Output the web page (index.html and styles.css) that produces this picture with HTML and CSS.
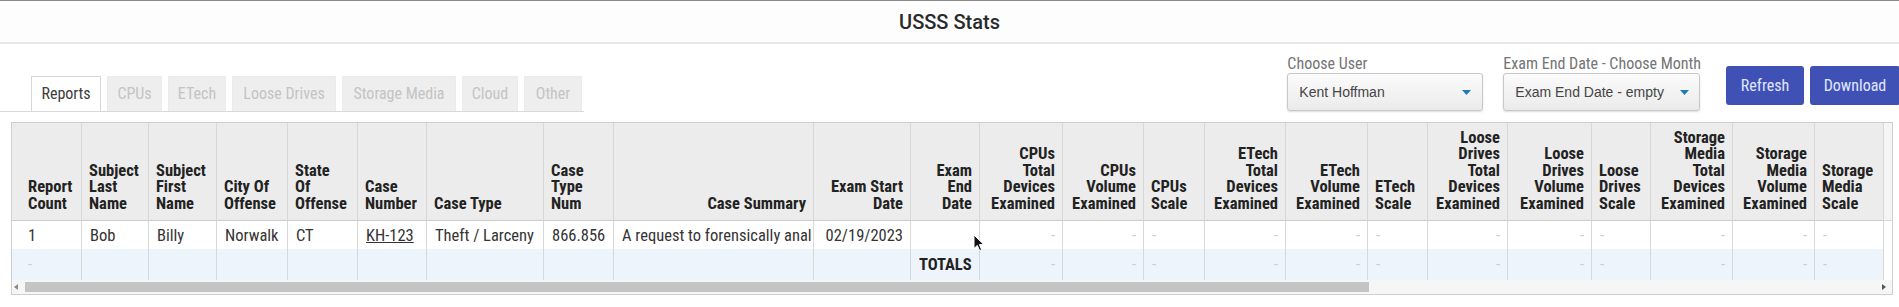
FILE: index.html
```html
<!DOCTYPE html>
<html lang="en">
<head>
<meta charset="utf-8">
<title>USSS Stats</title>
<link rel="stylesheet" href="styles.css">
</head>
<body>
<header class="topbar"><h1 class="title">USSS Stats</h1></header>

<div class="toolbar">
  <nav class="tabs">
    <span class="tab active t1">Reports</span>
    <span class="tab t2">CPUs</span>
    <span class="tab t3">ETech</span>
    <span class="tab t4">Loose Drives</span>
    <span class="tab t5">Storage Media</span>
    <span class="tab t6">Cloud</span>
    <span class="tab t7">Other</span>
  </nav>
  <div class="controls">
    <div class="field f1">
      <div class="field-label">Choose User</div>
      <div class="select s1"><span>Kent Hoffman</span><svg class="caret" width="9" height="5" viewBox="0 0 9 5"><path d="M0 0H9L4.5 5Z"/></svg></div>
    </div>
    <div class="field f2">
      <div class="field-label">Exam End Date - Choose Month</div>
      <div class="select s2"><span>Exam End Date - empty</span><svg class="caret" width="9" height="5" viewBox="0 0 9 5"><path d="M0 0H9L4.5 5Z"/></svg></div>
    </div>
    <button class="btn b1">Refresh</button>
    <button class="btn b2">Download</button>
  </div>
</div>

<div class="table-wrap">
  <div class="grid">
    <div class="cell hd c1">Report<br>Count</div>
    <div class="cell hd">Subject<br>Last<br>Name</div>
    <div class="cell hd">Subject<br>First<br>Name</div>
    <div class="cell hd">City Of<br>Offense</div>
    <div class="cell hd">State<br>Of<br>Offense</div>
    <div class="cell hd">Case<br>Number</div>
    <div class="cell hd">Case Type</div>
    <div class="cell hd">Case<br>Type<br>Num</div>
    <div class="cell hd r">Case Summary</div>
    <div class="cell hd r">Exam Start<br>Date</div>
    <div class="cell hd r">Exam<br>End<br>Date</div>
    <div class="cell hd r">CPUs<br>Total<br>Devices<br>Examined</div>
    <div class="cell hd r">CPUs<br>Volume<br>Examined</div>
    <div class="cell hd">CPUs<br>Scale</div>
    <div class="cell hd r">ETech<br>Total<br>Devices<br>Examined</div>
    <div class="cell hd r">ETech<br>Volume<br>Examined</div>
    <div class="cell hd">ETech<br>Scale</div>
    <div class="cell hd r">Loose<br>Drives<br>Total<br>Devices<br>Examined</div>
    <div class="cell hd r">Loose<br>Drives<br>Volume<br>Examined</div>
    <div class="cell hd">Loose<br>Drives<br>Scale</div>
    <div class="cell hd r">Storage<br>Media<br>Total<br>Devices<br>Examined</div>
    <div class="cell hd r">Storage<br>Media<br>Volume<br>Examined</div>
    <div class="cell hd">Storage<br>Media<br>Scale</div>
    <div class="gutter gh"></div>

    <div class="cell dr c1">1</div>
    <div class="cell dr">Bob</div>
    <div class="cell dr">Billy</div>
    <div class="cell dr">Norwalk</div>
    <div class="cell dr">CT</div>
    <div class="cell dr"><a class="link">KH-123</a></div>
    <div class="cell dr">Theft / Larceny</div>
    <div class="cell dr">866.856</div>
    <div class="cell dr">A request to forensically anal</div>
    <div class="cell dr r">02/19/2023</div>
    <div class="cell dr"></div>
    <div class="cell dr r dash">-</div>
    <div class="cell dr r dash">-</div>
    <div class="cell dr dash">-</div>
    <div class="cell dr r dash">-</div>
    <div class="cell dr r dash">-</div>
    <div class="cell dr dash">-</div>
    <div class="cell dr r dash">-</div>
    <div class="cell dr r dash">-</div>
    <div class="cell dr dash">-</div>
    <div class="cell dr r dash">-</div>
    <div class="cell dr r dash">-</div>
    <div class="cell dr dash">-</div>
    <div class="gutter"></div>

    <div class="cell dr tr c1 dash">-</div>
    <div class="cell dr tr"></div>
    <div class="cell dr tr"></div>
    <div class="cell dr tr"></div>
    <div class="cell dr tr"></div>
    <div class="cell dr tr"></div>
    <div class="cell dr tr"></div>
    <div class="cell dr tr"></div>
    <div class="cell dr tr"></div>
    <div class="cell dr tr"></div>
    <div class="cell dr tr total">TOTALS</div>
    <div class="cell dr tr r dash">-</div>
    <div class="cell dr tr r dash">-</div>
    <div class="cell dr tr dash">-</div>
    <div class="cell dr tr r dash">-</div>
    <div class="cell dr tr r dash">-</div>
    <div class="cell dr tr dash">-</div>
    <div class="cell dr tr r dash">-</div>
    <div class="cell dr tr r dash">-</div>
    <div class="cell dr tr dash">-</div>
    <div class="cell dr tr r dash">-</div>
    <div class="cell dr tr r dash">-</div>
    <div class="cell dr tr dash">-</div>
    <div class="gutter"></div>
  </div>
  <div class="hscroll">
    <span class="arrow-left"></span>
    <span class="thumb"></span>
    <span class="arrow-right"></span>
  </div>
</div>

<svg class="cursor" width="12" height="18" viewBox="0 0 12 18"><path d="M1 1V14.5L4.3 11.4L6.6 16.6L8.6 15.7L6.4 10.6H10.8Z" fill="#111" stroke="#fff" stroke-width="1"/></svg>
</body>
</html>
```

FILE: styles.css
```css
* { box-sizing: border-box; }

body {
  margin: 0;
  width: 1899px;
  height: 307px;
  overflow: hidden;
  position: relative;
  background: #fff;
  color: #333;
  font-family: Roboto, "Noto Sans", Arial, sans-serif;
}

.topbar {
  height: 44px;
  border-top: 1px solid #8a8a8a;
  border-bottom: 2px solid #e8e8e8;
  padding-top: 2px;
  text-align: center;
  background: #fdfdfd;
}

.title {
  margin: 0;
  font-size: 20px;
  font-weight: 500;
  line-height: 39px;
  color: #2a2a2a;
}

.toolbar {
  height: 68px;
  display: flex;
  align-items: flex-end;
  justify-content: space-between;
}

.tabs {
  display: flex;
  gap: 6px;
  width: 584px;
  padding-left: 31px;
  border-bottom: 1px solid #d8d8d8;
}

.tab {
  height: 35px;
  line-height: 33px;
  text-align: center;
  font-family: "Roboto Condensed", Roboto, sans-serif;
  font-size: 16px;
  background: #eeeeee;
  color: #c4c4c4;
  border: 1px solid #ebebeb;
  border-bottom: none;
}

.t1 { width: 70px; }
.t2 { width: 55px; }
.t3 { width: 58px; }
.t4 { width: 104px; }
.t5 { width: 114px; }
.t6 { width: 56px; }
.t7 { width: 58px; }

.tab.active {
  background: #fff;
  color: #3c3c3c;
  border-color: #d6d6d6;
}

.controls {
  display: flex;
  align-items: flex-end;
  padding-bottom: 1px;
  margin-right: -1px;
}

.field {
  display: flex;
  flex-direction: column;
}

.f1 { margin-right: 20px; }
.f2 { margin-right: 25px; }

.field-label {
  font-family: "Roboto Condensed", Roboto, sans-serif;
  font-size: 16px;
  line-height: 16px;
  color: #747474;
  margin-bottom: 1px;
  white-space: nowrap;
}

.select {
  height: 38px;
  display: flex;
  align-items: center;
  justify-content: space-between;
  padding: 0 11px;
  border: 1px solid #c8c8c8;
  border-radius: 3px;
  background: linear-gradient(#fbfbfb, #ebebeb);
  box-shadow: 0 1px 2px rgba(0, 0, 0, 0.14);
  font-family: "Liberation Sans", Arial, sans-serif;
  font-size: 14px;
  color: #454545;
}

.s1 { width: 196px; }
.s2 { width: 197px; padding-right: 10px; }

.caret { fill: #1c7db6; }

.btn {
  height: 39px;
  margin-bottom: 6px;
  border: none;
  border-radius: 3px;
  background: #3f51b5;
  color: #e2e7ff;
  font-family: "Roboto Condensed", Roboto, sans-serif;
  font-size: 16px;
  padding: 0;
  text-align: center;
}

.b1 { width: 78px; margin-right: 6px; }
.b2 { width: 90px; }

.table-wrap {
  margin: 10px 0 0 11px;
  width: 1882px;
  border: 1px solid #cfcfcf;
  overflow: hidden;
  background: #fff;
}

.grid {
  display: grid;
  grid-template-columns: 70px 67px 68px 71px 70px 69px 117px 70px 200px 97px 69px 83px 81px 61px 81px 82px 60px 80px 84px 59px 82px 82px 69px 1fr;
}

.cell {
  border-right: 1px solid #d8d8d8;
  padding: 0 7px 0 8px;
  white-space: nowrap;
  overflow: hidden;
  font-family: "Roboto Condensed", Roboto, sans-serif;
  font-size: 16.5px;
}

.c1 { padding-left: 16px; }

.hd {
  height: 98px;
  display: grid;
  align-content: end;
  padding-bottom: 8px;
  padding-left: 7px;
  background: #ececec;
  border-bottom: 1px solid #cbcbcb;
  font-weight: 700;
  line-height: 16.5px;
  color: #222;
}

.hd.c1 { padding-left: 16px; }
.hd.r { text-align: right; }

.gutter { background: #fff; }
.gutter.gh {
  background: #f5f5f5;
  border-bottom: 1px solid #d8d8d8;
}

.dr {
  height: 28px;
  display: flex;
  align-items: center;
  background: #fff;
  color: #343434;
}

.dr.r { justify-content: flex-end; }

.tr {
  height: 31px;
  background: #eef4fb;
}

.dash { color: #cdcdcd; }

.total {
  font-weight: 700;
  color: #222;
}

.link {
  color: #333;
  text-decoration: underline;
}

.hscroll {
  height: 14px;
  display: flex;
  align-items: center;
  padding: 0 6px 0 2px;
  background: #f6f6f6;
}

.arrow-left {
  width: 0;
  height: 0;
  border-top: 3px solid transparent;
  border-bottom: 3px solid transparent;
  border-right: 4px solid #8a8a8a;
}

.thumb {
  width: 1344px;
  height: 10px;
  margin-left: 7px;
  background: #c4c4c4;
}

.arrow-right {
  width: 0;
  height: 0;
  margin-left: auto;
  border-top: 3px solid transparent;
  border-bottom: 3px solid transparent;
  border-left: 4px solid #555;
}

.cursor {
  position: absolute;
  left: 973px;
  top: 234px;
}
```
